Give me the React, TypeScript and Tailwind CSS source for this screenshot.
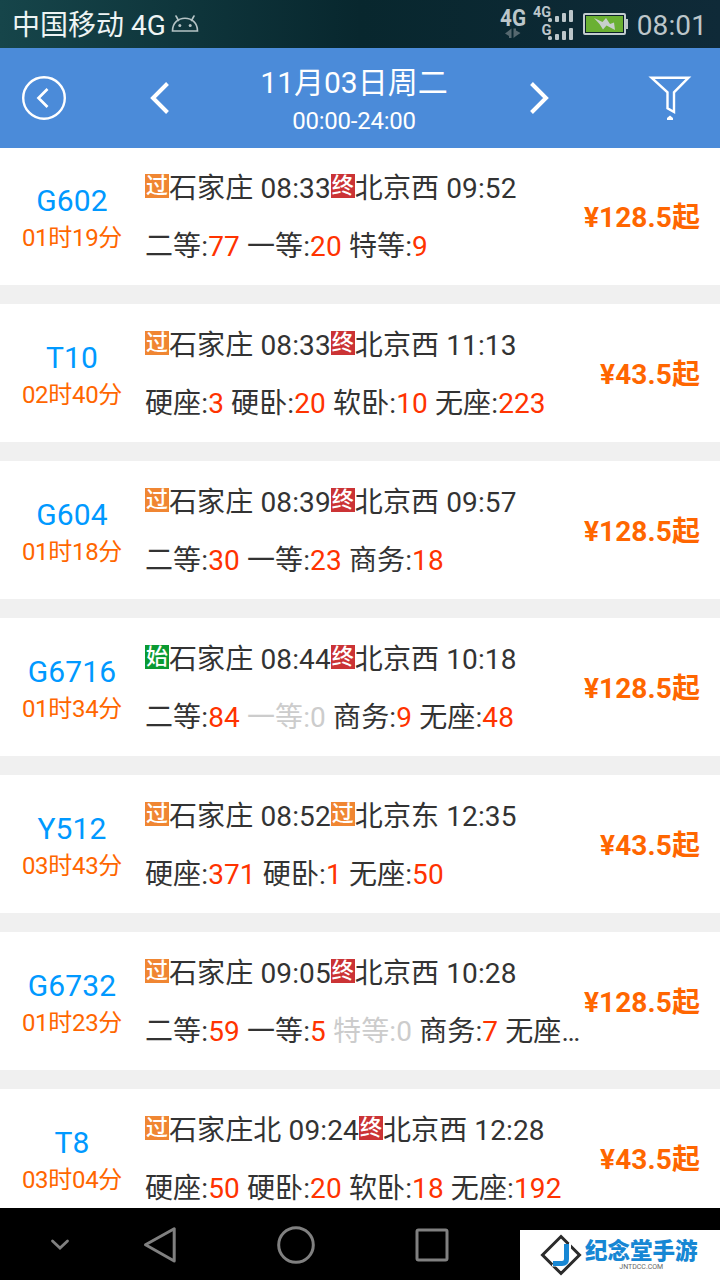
import clsx from 'clsx';

type StopKind = 'start' | 'pass' | 'end';

interface Stop {
  kind: StopKind;
  station: string;
  time: string;
}

interface Train {
  code: string;
  duration: string;
  from: Stop;
  to: Stop;
  seats: [string, number | null][];
  price: string;
}

const trains: Train[] = [
  {
    code: 'G602',
    duration: '01时19分',
    from: { kind: 'pass', station: '石家庄', time: '08:33' },
    to: { kind: 'end', station: '北京西', time: '09:52' },
    seats: [['二等', 77], ['一等', 20], ['特等', 9]],
    price: '128.5',
  },
  {
    code: 'T10',
    duration: '02时40分',
    from: { kind: 'pass', station: '石家庄', time: '08:33' },
    to: { kind: 'end', station: '北京西', time: '11:13' },
    seats: [['硬座', 3], ['硬卧', 20], ['软卧', 10], ['无座', 223]],
    price: '43.5',
  },
  {
    code: 'G604',
    duration: '01时18分',
    from: { kind: 'pass', station: '石家庄', time: '08:39' },
    to: { kind: 'end', station: '北京西', time: '09:57' },
    seats: [['二等', 30], ['一等', 23], ['商务', 18]],
    price: '128.5',
  },
  {
    code: 'G6716',
    duration: '01时34分',
    from: { kind: 'start', station: '石家庄', time: '08:44' },
    to: { kind: 'end', station: '北京西', time: '10:18' },
    seats: [['二等', 84], ['一等', 0], ['商务', 9], ['无座', 48]],
    price: '128.5',
  },
  {
    code: 'Y512',
    duration: '03时43分',
    from: { kind: 'pass', station: '石家庄', time: '08:52' },
    to: { kind: 'pass', station: '北京东', time: '12:35' },
    seats: [['硬座', 371], ['硬卧', 1], ['无座', 50]],
    price: '43.5',
  },
  {
    code: 'G6732',
    duration: '01时23分',
    from: { kind: 'pass', station: '石家庄', time: '09:05' },
    to: { kind: 'end', station: '北京西', time: '10:28' },
    // null = count cut off by the column width
    seats: [['二等', 59], ['一等', 5], ['特等', 0], ['商务', 7], ['无座', null]],
    price: '128.5',
  },
  {
    code: 'T8',
    duration: '03时04分',
    from: { kind: 'pass', station: '石家庄北', time: '09:24' },
    to: { kind: 'end', station: '北京西', time: '12:28' },
    seats: [['硬座', 50], ['硬卧', 20], ['软卧', 18], ['无座', 192]],
    price: '43.5',
  },
];

const badges: Record<StopKind, { label: string; color: string }> = {
  start: { label: '始', color: 'bg-[#0a9a32]' },
  pass: { label: '过', color: 'bg-[#f08632]' },
  end: { label: '终', color: 'bg-[#cb3335]' },
};

function StatusBar() {
  return (
    <div className="flex h-12 shrink-0 items-center bg-linear-to-r from-[#16454a] via-[#08272e] to-[#0f2a38] pl-3 pr-[13px]">
      <span className="pt-1 text-[28px] leading-[44px] text-[#eef4f4]">中国移动 4G</span>
      <svg className="ml-[5px]" width="28" height="18" viewBox="0 0 28 18" fill="none" stroke="#b5c3c5" strokeWidth="1.6">
        <path d="M1.500 16C1.500 8 7 3.300 14 3.300S26.500 8 26.500 16z" />
        <path d="M7.500 5.500 5 1M20.500 5.500 23 1" strokeLinecap="round" />
        <circle cx="8.800" cy="10.500" r="1.500" fill="#b5c3c5" stroke="none" />
        <circle cx="19.200" cy="10.500" r="1.500" fill="#b5c3c5" stroke="none" />
      </svg>
      <svg className="ml-auto" width="130" height="48" viewBox="0 0 130 48" fill="#bcc6ca">
        <text x="2" y="26" fontSize="24" fontWeight="700" textLength="26" lengthAdjust="spacingAndGlyphs">4G</text>
        <path d="M13.500 28.500v9.500h-2.500v-2L7 33.500zM15.500 38v-9.500h2.500v2l4.500 2.500-4.500 3z" fill="#56686f" />
        <text x="35" y="17" fontSize="15" fontWeight="700" textLength="18" lengthAdjust="spacingAndGlyphs">4G</text>
        <text x="43.500" y="35" fontSize="15" fontWeight="700" textLength="10" lengthAdjust="spacingAndGlyphs">G</text>
        <rect x="50" y="18" width="4" height="4" rx="1.500" />
        <rect x="57" y="16" width="4" height="6" rx="1" />
        <rect x="64" y="13" width="4" height="9" rx="1" />
        <rect x="71" y="10" width="4" height="12" rx="1" />
        <rect x="50" y="36" width="4" height="4" rx="1.500" />
        <rect x="57" y="34" width="4" height="6" rx="1" />
        <rect x="64" y="31" width="4" height="9" rx="1" />
        <rect x="71" y="28" width="4" height="12" rx="1" />
        <rect x="86" y="14" width="41" height="20" rx="1" fill="#0a2028" stroke="#c3cccf" strokeWidth="2" />
        <path d="M127 19h3v10h-3z" />
        <rect x="88" y="16" width="37" height="16" fill="#6ab033" />
        <path d="M96 18 104.500 22 108 18 112 24 116 22.500 117 30 108.500 25.500 105 29.500 101.500 24z" fill="#c8d0cc" />
      </svg>
      <span className="ml-[9px] pt-1 text-[28px] leading-[44px] tracking-[0.1px] text-[#bcc6ca]">08:01</span>
    </div>
  );
}

function Header() {
  return (
    <header className="flex h-[100px] shrink-0 items-center bg-[#4b8bd9] text-white">
      <button className="flex w-[88px] justify-center" aria-label="返回">
        <svg width="46" height="46" viewBox="0 0 46 46" fill="none" stroke="currentColor">
          <circle cx="23" cy="23" r="20.800" strokeWidth="2.400" />
          <path d="M26.500 14 17.500 23l9 9" strokeWidth="2.700" />
        </svg>
      </button>
      <button className="flex w-36 justify-center" aria-label="前一天">
        <svg width="22" height="34" viewBox="0 0 22 34" fill="none" stroke="currentColor" strokeWidth="4">
          <path d="M18.500 2.500 4 17l14.500 14.500" />
        </svg>
      </button>
      <div className="w-[244px] pt-[7px] text-center">
        <h1 className="text-[30px] leading-[38px]">11月03日周二</h1>
        <p className="text-[24px] leading-[38px] tracking-[-0.25px]">00:00-24:00</p>
      </div>
      <button className="flex w-[126px] justify-center" aria-label="后一天">
        <svg width="22" height="34" viewBox="0 0 22 34" fill="none" stroke="currentColor" strokeWidth="4">
          <path d="M3.500 2.500 18 17 3.500 31.500" />
        </svg>
      </button>
      <button className="ml-auto flex w-[100px] justify-center" aria-label="筛选">
        <svg width="44" height="46" viewBox="0 0 44 46" fill="none" stroke="currentColor" strokeWidth="2.400">
          <path d="M3.500 2.700h37L26 17.300v19.700l-6.500-3.700v-16z" />
          <path d="M19 45v-2l3-2.500 3 2.500v2z" fill="currentColor" stroke="none" />
        </svg>
      </button>
    </header>
  );
}

function StopLabel({ stop }: { stop: Stop }) {
  const badge = badges[stop.kind];
  return (
    <>
      <span
        className={clsx(
          'mb-[6px] flex size-6 shrink-0 items-center justify-center text-[22px] leading-6 font-medium tracking-normal text-white',
          badge.color,
        )}
      >
        {badge.label}
      </span>
      <span>{stop.station} {stop.time}</span>
    </>
  );
}

function TrainRow({ train }: { train: Train }) {
  return (
    <li className="flex h-[138px] shrink-0 bg-white">
      <div className="w-36 shrink-0 pt-[35px] text-center leading-[38px]">
        <div className="text-[30px] tracking-[0.15px] text-[#0099ff]">{train.code}</div>
        <div className="-mt-px text-[24px] tracking-[-0.3px] text-[#ff6600]">{train.duration}</div>
      </div>
      <div className="w-[436px] shrink-0 pt-[13px] pl-px text-[28px] leading-[58px] tracking-[0.12px] whitespace-pre text-[#333]">
        <div className="flex items-center">
          <StopLabel stop={train.from} />
          <StopLabel stop={train.to} />
        </div>
        <div>
          {train.seats.map(([name, count], i) => (
            <span key={name} className={clsx(count === 0 && 'text-[#ccc]')}>
              {i > 0 && ' '}
              {name}
              {count === null ? '…' : ':'}
              {count !== null && <span className={clsx(count > 0 && 'text-[#ff3300]')}>{count}</span>}
            </span>
          ))}
        </div>
      </div>
      <div className="flex-1 pt-[13px] pr-5 text-right text-[28px] leading-[116px] font-bold tracking-[0.1px] whitespace-nowrap text-[#ff6600]">
        ¥{train.price}起
      </div>
    </li>
  );
}

function NavBar() {
  return (
    <nav className="relative flex h-[72px] shrink-0 items-center bg-black pl-7">
      <div className="flex w-16 justify-center">
        <svg width="20" height="14" viewBox="0 0 20 14" fill="none" stroke="#808080" strokeWidth="2.800">
          <path d="m2.500 4 7.500 7 7.500-7" strokeLinecap="round" />
        </svg>
      </div>
      <div className="flex w-[136px] justify-center">
        <svg width="36" height="40" viewBox="0 0 36 40" fill="none" stroke="#808080" strokeWidth="3">
          <path d="M32.200 4.700v32.300L3.500 20.800z" strokeLinejoin="round" />
        </svg>
      </div>
      <div className="flex w-[136px] justify-center">
        <svg width="40" height="40" viewBox="0 0 40 40" fill="none" stroke="#808080" strokeWidth="3">
          <circle cx="20" cy="21" r="17.300" />
        </svg>
      </div>
      <div className="flex w-[136px] justify-center">
        <svg width="36" height="36" viewBox="0 0 36 36" fill="none" stroke="#808080" strokeWidth="3">
          <rect x="3" y="4" width="30" height="30" rx="1.500" />
        </svg>
      </div>
      <div className="absolute right-0 bottom-0 flex h-[50px] w-[200px] items-start bg-white pl-5">
        <svg className="mt-[4px]" width="42" height="42" viewBox="0 0 42 42" fill="none">
          <path d="M21 2.500 39.500 21 21 39.500 2.500 21z" stroke="#2b2b2b" strokeWidth="3" />
          <path d="M30 9v16M12 31.500h12" stroke="#fff" strokeWidth="2" />
          <path d="M26.500 10v15q0 4.500-4.500 4.500H13" stroke="#1787d4" strokeWidth="5" />
        </svg>
        <div className="ml-[3px] pt-[9px] text-center">
          <div className="text-[22.500px] leading-6 font-black text-[#1787d4]">纪念堂手游</div>
          <div className="text-[7px] leading-2 text-[#666]">JNTDCC.COM</div>
        </div>
      </div>
    </nav>
  );
}

export default function App() {
  return (
    <div className="flex h-[1280px] w-[720px] flex-col overflow-hidden bg-[#f0f0f0] font-[Roboto,'Noto_Sans_CJK_SC',sans-serif]">
      <StatusBar />
      <Header />
      <main className="min-h-0 flex-1 overflow-hidden">
        <ul className="-mt-px flex flex-col gap-[19px]">
          {trains.map((train) => (
            <TrainRow key={train.code} train={train} />
          ))}
        </ul>
      </main>
      <NavBar />
    </div>
  );
}
